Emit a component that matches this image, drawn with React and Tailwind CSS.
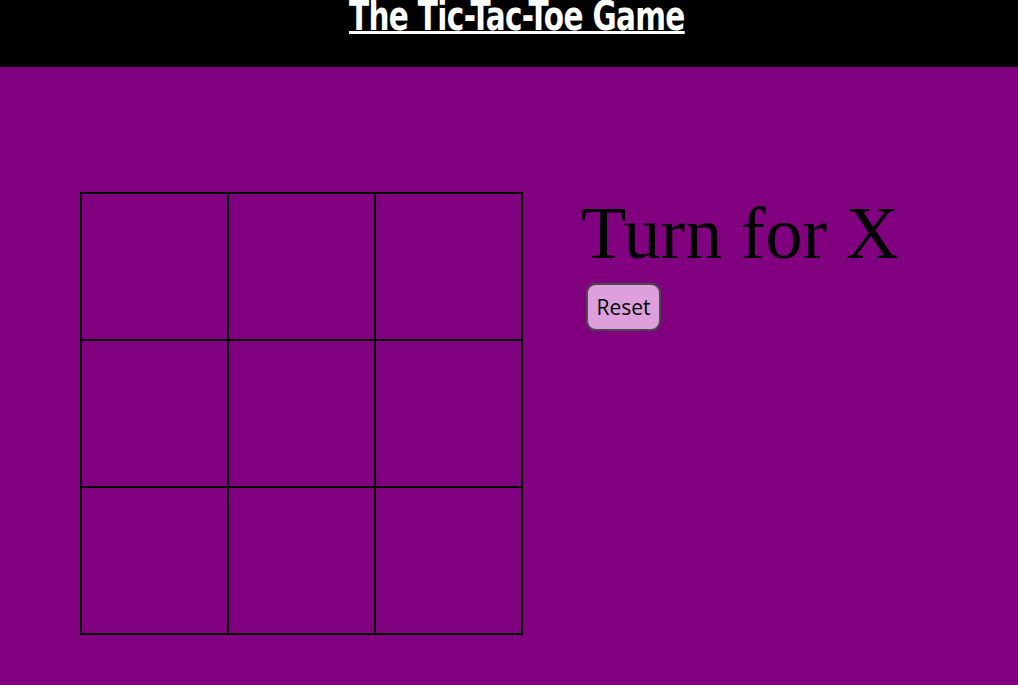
import { useState } from 'react'

export default function App() {
  const [cells, setCells] = useState(Array(9).fill(''))
  const [turn, setTurn] = useState('X')

  const play = (i) => {
    if (cells[i]) return
    const next = [...cells]
    next[i] = turn
    setCells(next)
    setTurn(turn === 'X' ? 'O' : 'X')
  }

  const reset = () => {
    setCells(Array(9).fill(''))
    setTurn('X')
  }

  return (
    <div className="min-h-[685px] bg-[#800080]">
      {/* Header */}
      <div className="h-[67px] bg-black flex justify-center">
        <h1
          className="ml-[15px] h-[36px] text-white text-[41px] leading-[0.8] font-bold underline decoration-[3px] underline-offset-[1px] tracking-[-0.8px] scale-x-[0.8] whitespace-nowrap"
          style={{ fontFamily: 'Impact, "DejaVu Sans Condensed", "Liberation Sans Narrow", sans-serif' }}
        >
          The Tic-Tac-Toe Game
        </h1>
      </div>

      {/* Board + status */}
      <div className="flex items-start pl-[80px] pt-[125px]">
        <div className="grid grid-cols-[repeat(3,145px)] grid-rows-[repeat(3,145px)] gap-[2px] p-[2px] bg-black">
          {cells.map((c, i) => (
            <button
              key={i}
              onClick={() => play(i)}
              className="bg-[#800080] text-black text-[80px] leading-none"
              style={{ fontFamily: '"Liberation Serif", serif' }}
            >
              {c}
            </button>
          ))}
        </div>

        <div className="ml-[58px] mt-[4px] flex flex-col items-start">
          <div
            className="text-black text-[74px] leading-none"
            style={{ fontFamily: '"Liberation Serif", serif' }}
          >
            Turn for {turn}
          </div>
          <button
            onClick={reset}
            className="mt-[13px] ml-[5px] w-[75px] h-[48px] rounded-[10px] border-2 border-[#4a4a4a] bg-[#dda0dd] text-black text-[21px] font-medium leading-none"
            style={{ fontFamily: '"Open Sans", sans-serif' }}
          >
            Reset
          </button>
        </div>
      </div>
    </div>
  )
}
